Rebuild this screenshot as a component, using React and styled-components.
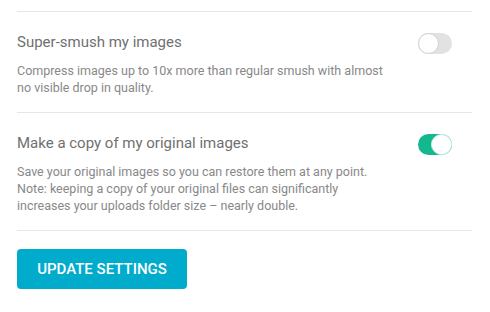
import React, { useState } from 'react';
import styled, { createGlobalStyle } from 'styled-components';

const GlobalStyle = createGlobalStyle`
    body {
        margin: 0;
        background: #fff;
        font-family: Roboto, "Liberation Sans", Arial, sans-serif;
    }
`

const Settings = styled.div`
    width: 455px;
    padding: 11px 17px 0;
`

const Section = styled.div`
    display: flex;
    justify-content: space-between;
    align-items: flex-start;
    border-top: 1px solid #e6e6e6;
    padding: 20px 20px 16px 0;
`

const Text = styled.div`
    max-width: 370px;
`

const Title = styled.div`
    font-size: 15px;
    line-height: 20px;
    color: #707070;
    margin-bottom: 10px;
`

const Description = styled.div`
    font-size: 12.5px;
    line-height: 17px;
    color: #888;
`

const Track = styled.button`
    position: relative;
    flex: none;
    width: 34px;
    height: 21px;
    margin-top: 1px;
    padding: 0;
    border: none;
    border-radius: 11px;
    background: ${p => (p.$on ? '#14b88f' : '#e2e2e2')};
    cursor: pointer;
`

const Knob = styled.span`
    position: absolute;
    top: 0;
    left: ${p => (p.$on ? '13px' : '0')};
    width: 21px;
    height: 21px;
    box-sizing: border-box;
    border-radius: 50%;
    background: #fff;
    border: 1px solid ${p => (p.$on ? '#d8f0ea' : '#cfcfcf')};
`

const Footer = styled.div`
    border-top: 1px solid #e6e6e6;
    padding-top: 18px;
`

const UpdateButton = styled.button`
    width: 170px;
    height: 40px;
    border: none;
    border-radius: 4px;
    background: #00abcc;
    color: #fff;
    font-family: Roboto, "Liberation Sans", Arial, sans-serif;
    font-size: 15px;
    font-weight: 500;
    text-transform: uppercase;
    cursor: pointer;
`

const Toggle = ({ on, onChange }) => (
    <Track $on={on} onClick={() => onChange(!on)}>
        <Knob $on={on} />
    </Track>
)

const options = [
    {
        id: 'super',
        title: 'Super-smush my images',
        text: 'Compress images up to 10x more than regular smush with almost no visible drop in quality.',
    },
    {
        id: 'backup',
        title: 'Make a copy of my original images',
        text: 'Save your original images so you can restore them at any point. Note: keeping a copy of your original files can significantly increases your uploads folder size – nearly double.',
    },
]

const App = () => {
    const [values, setValues] = useState({ super: false, backup: true })

    return (
        <Settings>
            <GlobalStyle />
            {options.map(o => (
                <Section key={o.id}>
                    <Text>
                        <Title>{o.title}</Title>
                        <Description>{o.text}</Description>
                    </Text>
                    <Toggle
                        on={values[o.id]}
                        onChange={v => setValues({ ...values, [o.id]: v })}
                    />
                </Section>
            ))}
            <Footer>
                <UpdateButton>Update settings</UpdateButton>
            </Footer>
        </Settings>
    )
}

export default App;
